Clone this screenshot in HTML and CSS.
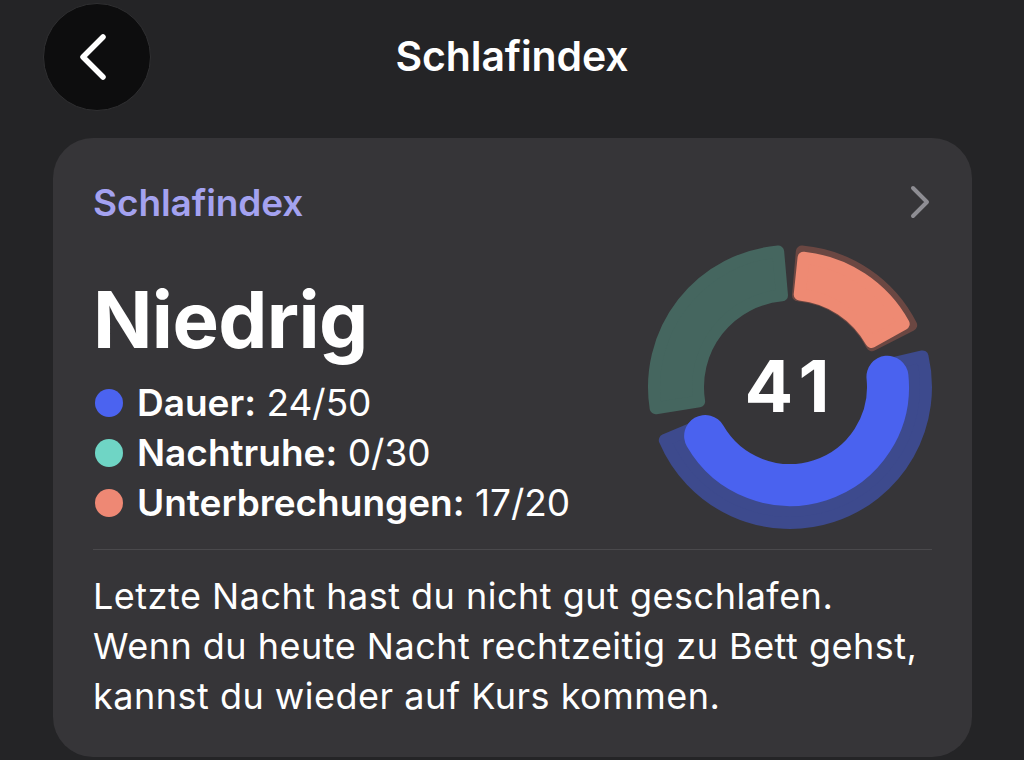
FILE: index.html
```html
<!DOCTYPE html>
<html lang="de">
<head>
<meta charset="utf-8">
<title>Schlafindex</title>
<link rel="stylesheet" href="styles.css">
</head>
<body>
<header class="topbar">
  <div class="topbar-left">
    <button class="back-btn" aria-label="Zurück">
      <svg width="30" height="48" viewBox="0 0 30 48"><path d="M24 4 L4 24 L24 44" fill="none" stroke="#fff" stroke-width="5.5" stroke-linecap="round" stroke-linejoin="round"/></svg>
    </button>
  </div>
  <h1 class="topbar-title">Schlafindex</h1>
  <div></div>
</header>

<section class="card">
  <div class="card-head">
    <span class="card-label">Schlafindex</span>
    <svg class="chev" width="20" height="34" viewBox="0 0 20 34"><path d="M3 3 L17 17 L3 31" fill="none" stroke="#8e8d93" stroke-width="4" stroke-linecap="round" stroke-linejoin="round"/></svg>
  </div>

  <div class="card-main">
    <div class="summary">
      <div class="level">Niedrig</div>
      <ul class="legend">
        <li><span class="dot dot-blue"></span><b>Dauer:</b>&nbsp;24/50</li>
        <li><span class="dot dot-teal"></span><b>Nachtruhe:</b>&nbsp;0/30</li>
        <li><span class="dot dot-salmon"></span><b>Unterbrechungen:</b>&nbsp;17/20</li>
      </ul>
    </div>
    <div class="ring">
      <svg class="ring-svg" width="290" height="290" viewBox="0 0 290 290">
        <g stroke-width="12" stroke-linejoin="round">
          <path class="seg-green" d="M10.67 166.27 A136 136 0 0 1 133.15 9.52 L136.98 53.35 A92 92 0 0 0 54.13 159.39 Z"/>
          <path class="seg-salmon-dim" d="M156.85 9.52 A136 136 0 0 1 266.18 83.26 L226.97 103.23 A92 92 0 0 0 153.02 53.35 Z"/>
          <path class="seg-salmon" d="M158.59 15.71 A130 130 0 0 1 258.70 81.97 L226.34 99.91 A93 93 0 0 0 154.72 52.51 Z"/>
          <path class="seg-blue-dim" d="M277.51 114.41 A136 136 0 0 1 19.81 198.14 L60.31 180.95 A92 92 0 0 0 234.64 124.30 Z"/>
        </g>
        <path class="seg-blue" d="M242.46 134.76 A98 98 0 0 1 60.13 194" fill="none" stroke-width="42" stroke-linecap="round"/>
      </svg>
      <div class="score">41</div>
    </div>
  </div>

  <p class="note">Letzte Nacht hast du nicht gut geschlafen.<br>Wenn du heute Nacht rechtzeitig zu Bett gehst,<br>kannst du wieder auf Kurs kommen.</p>
</section>
</body>
</html>
```
FILE: styles.css
```css
* { box-sizing: border-box; }

html, body {
  margin: 0;
  padding: 0;
  background: #242426;
  color: #fff;
  font-family: "Inter", "Liberation Sans", sans-serif;
  height: 760px;
  overflow: hidden;
}

.topbar {
  display: grid;
  grid-template-columns: 1fr auto 1fr;
  align-items: center;
  height: 112px;
  padding-top: 2px;
}

.topbar-left {
  padding-left: 43px;
  display: flex;
  align-items: center;
}

.back-btn {
  width: 108px;
  height: 108px;
  border-radius: 50%;
  background: #0d0d0e;
  border: 1px solid #303032;
  display: flex;
  align-items: center;
  justify-content: center;
  padding: 0 6px 0 0;
  margin: 0;
}

.topbar-title {
  margin: 0;
  font-size: 41px;
  font-weight: 600;
  letter-spacing: -0.1px;
  line-height: 1;
  padding-bottom: 2px;
}

.card {
  margin: 26px 52px 0 53px;
  background: #363538;
  border-radius: 40px;
  padding: 44px 40px 34px 40px;
  height: 619px;
}

.card-head {
  display: flex;
  align-items: center;
  justify-content: space-between;
  height: 40px;
}

.card-label {
  color: #a4a2f0;
  font-size: 37px;
  font-weight: 600;
  letter-spacing: -0.1px;
}

.chev {
  margin-right: 2px;
}

.card-main {
  display: flex;
  justify-content: space-between;
  align-items: flex-start;
  margin-top: 20px;
}

.summary {
  padding-top: 38px;
}

.level {
  font-size: 78px;
  font-weight: 700;
  line-height: 80px;
  letter-spacing: -0.6px;
}

.legend {
  list-style: none;
  margin: 18px 0 0 0;
  padding: 0;
}

.legend li {
  display: flex;
  align-items: center;
  font-size: 37px;
  line-height: 50px;
  letter-spacing: 0;
}

.legend b {
  font-weight: 600;
}

.dot {
  width: 28px;
  height: 28px;
  border-radius: 50%;
  margin: 0 14px 0 2px;
  flex: none;
}

.dot-blue { background: #4b63f0; }
.dot-teal { background: #6fd5c5; }
.dot-salmon { background: #ee8874; }

.ring {
  display: grid;
  place-items: center;
  margin-right: -3px;
}

.ring > * {
  grid-area: 1 / 1;
}

.seg-green { fill: #45665f; stroke: #45665f; }
.seg-salmon-dim { fill: #6b4742; stroke: #6b4742; }
.seg-salmon { fill: #ee8a73; stroke: #ee8a73; }
.seg-blue-dim { fill: #3d4a8d; stroke: #3d4a8d; }
.seg-blue { stroke: #4a62ef; }

.score {
  font-size: 72px;
  font-weight: 700;
  letter-spacing: 8px;
  padding-left: 2px;
  line-height: 1;
  padding-bottom: 2px;
}

.note {
  margin: 17px 0 0 0;
  border-top: 1px solid #4a494c;
  padding-top: 21px;
  font-size: 36px;
  line-height: 50px;
  letter-spacing: 0.5px;
  white-space: nowrap;
}
```
